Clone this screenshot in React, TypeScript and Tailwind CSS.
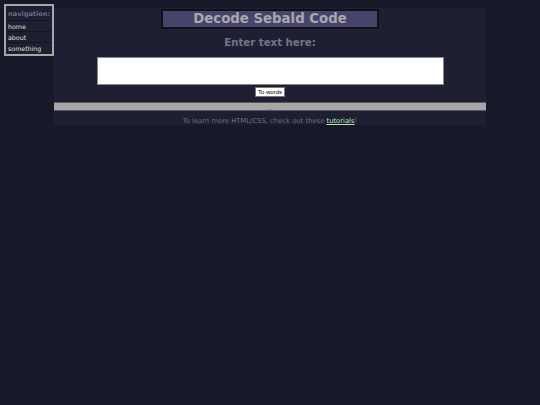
export default function App() {
  return (
    <div className="min-h-[405px] w-[540px] bg-[#181928] relative" style={{ fontFamily: '"DejaVu Sans", Verdana, sans-serif' }}>
      <div className="absolute left-[4px] top-[4px] w-[50px] border-2 border-[#a8a6a8] bg-[#1f1f33] flex flex-col">
        <div className="px-[2px] pt-[3px] pb-[1px] text-[6.6px] font-bold text-[#6d6b80] leading-[10px] border-b border-[#15151f] whitespace-nowrap">navigation:</div>
        <div className="px-[2px] text-[6.3px] text-[#d2e8c6] leading-[11px] h-[11px] border-b border-[#15151f]">home</div>
        <div className="px-[2px] text-[6.3px] text-[#d2e8c6] leading-[11px] h-[11px] border-b border-[#15151f]">about</div>
        <div className="px-[2px] text-[6.3px] text-[#d2e8c6] leading-[11px] h-[11px]">something</div>
      </div>
      <div className="pt-[8px] flex justify-center">
        <div className="w-[432px] bg-[#1f1f33] flex flex-col items-center">
          <div className="mt-[1px] w-[218px] h-[20px] border-2 border-[#111118] bg-[#46446a] flex items-center justify-center text-[13.3px] font-bold text-[#a9a8ab] leading-none">Decode Sebald Code</div>
          <div className="mt-[9px] text-[10.2px] font-bold text-[#75738a] leading-none">Enter text here:</div>
          <div className="mt-[9px] w-[347px] h-[28px] bg-white border border-[#888]"></div>
          <div className="mt-[2px] h-[10px] px-[2px] bg-white border border-[#777] text-[6px] leading-[8px] text-black" style={{ fontFamily: '"Liberation Sans", Arial, sans-serif' }}>To words</div>
          <div className="mt-[5px] w-full h-[9px] bg-[#a9a6a6] border-t border-b border-[#55546a] relative">
            <div className="absolute left-0 right-0 top-[2px] text-center text-[6px] text-[#666] leading-none">...</div>
          </div>
          <div className="mt-[7px] text-[6.8px] text-[#6d6c80] leading-[7px]">
            To learn more HTML/CSS, check out these <span className="text-[#b8e8b0] underline">tutorials</span>!
          </div>
        </div>
      </div>
    </div>
  );
}
